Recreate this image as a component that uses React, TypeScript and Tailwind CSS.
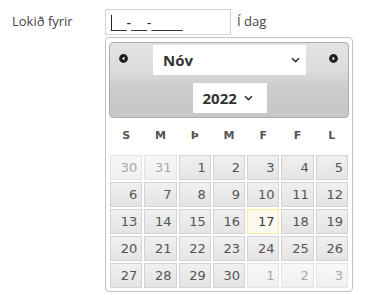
import React from "react";

const days: { d: number; other?: boolean; today?: boolean }[] = [
  { d: 30, other: true }, { d: 31, other: true }, { d: 1 }, { d: 2 }, { d: 3 }, { d: 4 }, { d: 5 },
  { d: 6 }, { d: 7 }, { d: 8 }, { d: 9 }, { d: 10 }, { d: 11 }, { d: 12 },
  { d: 13 }, { d: 14 }, { d: 15 }, { d: 16 }, { d: 17, today: true }, { d: 18 }, { d: 19 },
  { d: 20 }, { d: 21 }, { d: 22 }, { d: 23 }, { d: 24 }, { d: 25 }, { d: 26 },
  { d: 27 }, { d: 28 }, { d: 29 }, { d: 30 }, { d: 1, other: true }, { d: 2, other: true }, { d: 3, other: true },
];

const weekdays = ["S", "M", "Þ", "M", "F", "F", "L"];

function CircleArrow({ dir }: { dir: "w" | "e" }) {
  return (
    <svg width="9" height="9" viewBox="0 0 9 9">
      <circle cx="4.5" cy="4.5" r="4.4" fill="#1e1e1e" />
      {dir === "w" ? (
        <polygon points="5.4,2.6 5.4,6.4 3.1,4.5" fill="#fff" />
      ) : (
        <polygon points="3.6,2.6 3.6,6.4 5.9,4.5" fill="#fff" />
      )}
    </svg>
  );
}

function Chevron() {
  return (
    <svg width="9" height="6" viewBox="0 0 9 6">
      <path d="M1 1.2 L4.5 4.6 L8 1.2" stroke="#333" strokeWidth="1.6" fill="none" />
    </svg>
  );
}

export default function App() {
  return (
    <div className="w-[368px] h-[295px] bg-white overflow-hidden font-['Open_Sans',sans-serif] text-[13px] text-[#333]">
      <div className="flex pt-[9px] pl-[12px]">
        <div className="w-[93px] h-[26px] flex items-center text-[#444]">Lokið fyrir</div>

        <div className="flex flex-col">
          <div className="flex items-center">
            <div className="w-[126px] h-[26px] border border-[#d2d2d2] flex items-center pl-[5px]">
              <span className="w-px h-[15px] bg-[#222] mr-[-1px]" />
              <span className="text-[#333] leading-none font-['Liberation_Sans',sans-serif] text-[14px] pt-[2px]">__-__-____</span>
            </div>
            <span className="ml-[6px] text-[#444]">Í dag</span>
          </div>

          {/* datepicker */}
          <div className="mt-[2px] w-[248px] border border-[#c2c2c2] rounded-[4px] bg-white px-[3px] pt-[4px] pb-[3px]">
            <div className="h-[76px] border border-[#acacac] rounded-[4px] bg-[linear-gradient(to_bottom,#e3e3e3_0%,#dddddd_35%,#cbcbcb_62%,#c7c7c7_100%)] flex flex-col">
              <div className="flex items-start pt-[2px]">
                <div className="w-[43px] pl-[9px] pt-[9px]">
                  <CircleArrow dir="w" />
                </div>
                <div className="w-[153px] h-[30px] bg-white flex items-center justify-between pl-[10px] pr-[6px]">
                  <span className="font-bold text-[15px] text-[#333]">Nóv</span>
                  <Chevron />
                </div>
                <div className="pl-[23px] pt-[9px]">
                  <CircleArrow dir="e" />
                </div>
              </div>
              <div className="flex justify-center mt-[8px] pl-[1px]">
                <div className="w-[74px] h-[30px] bg-white flex items-center pl-[10px] gap-[7px]">
                  <span className="font-bold text-[15px] text-[#333]">2022</span>
                  <Chevron />
                </div>
              </div>
            </div>

            <div className="grid grid-cols-7 gap-x-[2px] px-[1px] h-[37px] items-center font-['DejaVu_Sans',sans-serif] font-bold text-[11px] text-[#555]">
              {weekdays.map((w, i) => (
                <div key={i} className="text-center">{w}</div>
              ))}
            </div>

            <div className="grid grid-cols-7 gap-[2px] px-[1px] font-['DejaVu_Sans',sans-serif] text-[13px]">
              {days.map((c, i) => (
                <div
                  key={i}
                  className={
                    c.today
                      ? "h-[25px] border border-[#fcefa1] bg-[#fbf9ee] text-[#363636] flex items-center justify-end pr-[4px]"
                      : c.other
                      ? "h-[25px] border border-[#e4e4e4] bg-[linear-gradient(to_bottom,#f7f7f7,#f0f0f0)] text-[#a8a8a8] flex items-center justify-end pr-[4px]"
                      : "h-[25px] border border-[#d3d3d3] bg-[linear-gradient(to_bottom,#f0f0f0,#e4e4e4)] text-[#555] flex items-center justify-end pr-[4px]"
                  }
                >
                  {c.d}
                </div>
              ))}
            </div>
          </div>
        </div>
      </div>
    </div>
  );
}
